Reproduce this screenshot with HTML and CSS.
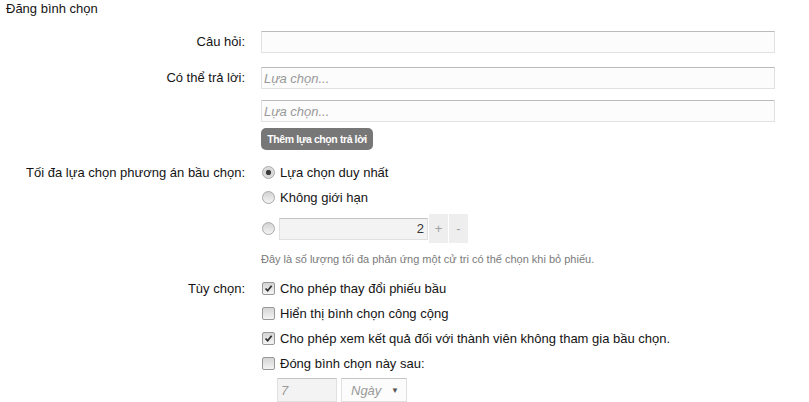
FILE: index.html
```html
<!DOCTYPE html>
<html lang="vi">
<head>
  <meta charset="UTF-8">
  <meta name="viewport" content="width=device-width, initial-scale=1.0">
  <title>Đăng bình chọn</title>
  <link rel="stylesheet" href="styles.css">
</head>
<body>
  <div class="poll">
    <h3 class="poll-title">Đăng bình chọn</h3>

    <div class="field field-question">
      <label class="field-label">Câu hỏi:</label>
      <div class="field-ctrl">
        <input type="text" class="text-input">
      </div>
    </div>

    <div class="field field-answers">
      <label class="field-label">Có thể trả lời:</label>
      <div class="field-ctrl">
        <input type="text" class="text-input" placeholder="Lựa chọn...">
        <input type="text" class="text-input second" placeholder="Lựa chọn...">
        <button class="add-btn">Thêm lựa chọn trả lời</button>
      </div>
    </div>

    <div class="field field-max">
      <label class="field-label">Tối đa lựa chọn phương án bầu chọn:</label>
      <div class="field-ctrl">
        <div class="opt"><span class="radio on"></span>Lựa chọn duy nhất</div>
        <div class="opt"><span class="radio"></span>Không giới hạn</div>
        <div class="opt num-row">
          <span class="radio"></span>
          <input type="text" class="num-input" value="2">
          <button class="step">+</button>
          <button class="step">-</button>
        </div>
        <p class="help">Đây là số lượng tối đa phản ứng một cử tri có thể chọn khi bỏ phiếu.</p>
      </div>
    </div>

    <div class="field field-options">
      <label class="field-label">Tùy chọn:</label>
      <div class="field-ctrl">
        <div class="opt"><span class="check on"><svg viewBox="0 0 13 13"><path d="M3 6.5 L5.5 9.2 L10.2 3.2" /></svg></span>Cho phép thay đổi phiếu bầu</div>
        <div class="opt"><span class="check"></span>Hiển thị bình chọn công cộng</div>
        <div class="opt"><span class="check on"><svg viewBox="0 0 13 13"><path d="M3 6.5 L5.5 9.2 L10.2 3.2" /></svg></span>Cho phép xem kết quả đối với thành viên không tham gia bầu chọn.</div>
        <div class="opt"><span class="check"></span>Đóng bình chọn này sau:</div>
        <div class="close-after">
          <input type="text" class="days-input" value="7">
          <span class="unit-select">Ngày<span class="arrow">▼</span></span>
        </div>
      </div>
    </div>
  </div>
</body>
</html>
```

FILE: styles.css
```css
body {
  margin: 0;
  font-family: "Liberation Sans", Arial, sans-serif;
  font-size: 13px;
  color: #141414;
  background: #fff;
}

.poll {
  padding-right: 34px;
}

.poll-title {
  margin: 0;
  padding: 1px 6px 0;
  font-size: 13px;
  font-weight: normal;
  line-height: 16px;
}

.field {
  display: grid;
  grid-template-columns: 245px 1fr;
  column-gap: 16px;
}

.field-label {
  text-align: right;
  line-height: 25px;
}

.field-ctrl {
  display: flex;
  flex-direction: column;
  align-items: flex-start;
}

.field-question {
  margin-top: 14px;
}

.field-question .field-label {
  line-height: 22px;
}

.field-answers {
  margin-top: 14px;
}

.field-answers .field-label {
  line-height: 22px;
}

.field-max {
  margin-top: 10px;
}

.field-options {
  margin-top: 10px;
}

.text-input {
  box-sizing: border-box;
  width: 100%;
  height: 22px;
  margin: 0;
  padding: 0 2px;
  border: 1px solid #e2e2e2;
  border-top-color: #bcbcbc;
  background: #fcfcfc;
  font-family: inherit;
  font-size: 13px;
  color: #141414;
}

.text-input::placeholder {
  font-style: italic;
  color: #999;
}

.text-input.second {
  margin-top: 11px;
}

.add-btn {
  margin-top: 6px;
  height: 22px;
  width: 112px;
  padding: 0;
  border: none;
  border-radius: 5px;
  background: #777;
  color: #fff;
  font-family: inherit;
  font-size: 10.5px;
  font-weight: bold;
  letter-spacing: -0.4px;
  white-space: nowrap;
}

.opt {
  display: flex;
  align-items: center;
  height: 25px;
}

.radio {
  box-sizing: border-box;
  width: 13px;
  height: 13px;
  margin: 0 5px 0 1px;
  border: 1px solid #a9a9a9;
  border-radius: 50%;
  background: linear-gradient(#d3d3d3, #f4f4f4);
  flex-shrink: 0;
}

.radio.on {
  background: radial-gradient(circle, #333 0, #444 2.3px, #d4d4d4 3px, #ececec 100%);
}

.check {
  box-sizing: border-box;
  width: 13px;
  height: 13px;
  margin: 0 5px 0 1px;
  border: 1px solid #989898;
  border-radius: 2px;
  background: linear-gradient(#d4d4d4, #f4f4f4);
  flex-shrink: 0;
  display: flex;
}

.check svg {
  width: 11px;
  height: 11px;
}

.check path {
  fill: none;
  stroke: #2b2b2b;
  stroke-width: 2;
}

.num-row {
  height: 29px;
  margin-top: 4px;
}

.num-row .radio {
  margin-right: 4px;
}

.num-input {
  box-sizing: border-box;
  width: 149px;
  height: 22px;
  margin: 0;
  padding: 0 3px;
  border: 1px solid #e0e0e0;
  border-top-color: #c4c4c4;
  background: #f3f3f3;
  text-align: right;
  font-family: inherit;
  font-size: 13px;
  color: #333;
}

.step {
  width: 19px;
  height: 29px;
  margin-left: 1px;
  padding: 0;
  border: none;
  background: #eee;
  color: #a0a0a0;
  font-family: inherit;
  font-size: 13px;
}

.help {
  margin: 9px 0 0;
  font-size: 11px;
  line-height: 14px;
  color: #7a7a7a;
}

.close-after {
  display: flex;
  gap: 4px;
  margin: 2px 0 0 16px;
}

.days-input {
  box-sizing: border-box;
  width: 60px;
  height: 24px;
  margin: 0;
  padding: 0 3px;
  border: 1px solid #e0e0e0;
  border-top-color: #c4c4c4;
  background: #f3f3f3;
  font-family: inherit;
  font-size: 13px;
  font-style: italic;
  color: #999;
}

.unit-select {
  box-sizing: border-box;
  display: flex;
  align-items: center;
  width: 66px;
  height: 24px;
  padding: 0 7px 0 9px;
  border: 1px solid #e0e0e0;
  border-top-color: #c4c4c4;
  background: #fcfcfc;
  font-style: italic;
  color: #999;
}

.unit-select .arrow {
  margin-left: auto;
  font-size: 8px;
  font-style: normal;
  color: #555;
}
```
